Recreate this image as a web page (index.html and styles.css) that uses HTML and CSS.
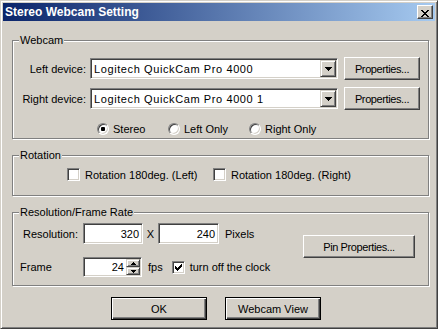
FILE: index.html
```html
<!DOCTYPE html>
<html lang="en">
<head>
    <meta charset="UTF-8" />
    <title>Stereo Webcam Setting</title>
    <link rel="stylesheet" href="styles.css">
</head>
<body>
    <div class="window">
        <div class="titlebar">
            <span class="title">Stereo Webcam Setting</span>
            <button class="btn close-btn">
                <svg width="8" height="7" viewBox="0 0 8 7" shape-rendering="crispEdges"><path fill="#000" d="M0 0h2v1h-2z M6 0h2v1h-2z M1 1h2v1h-2z M5 1h2v1h-2z M2 2h4v1h-4z M3 3h2v1h-2z M2 4h4v1h-4z M1 5h2v1h-2z M5 5h2v1h-2z M0 6h2v1h-2z M6 6h2v1h-2z"/></svg>
            </button>
        </div>

        <div class="client">
            <fieldset class="group group-webcam">
                <legend>Webcam</legend>
                <div class="device-row">
                    <span class="device-label">Left device:</span>
                    <div class="combo sunken">
                        <span class="combo-text">Logitech QuickCam Pro 4000</span>
                        <span class="combo-arrow">
                            <svg width="7" height="4" viewBox="0 0 7 4" shape-rendering="crispEdges"><path fill="#000" d="M0 0h7v1h-7z M1 1h5v1h-5z M2 2h3v1h-3z M3 3h1v1h-1z"/></svg>
                        </span>
                    </div>
                    <button class="btn btn-props">Properties...</button>
                </div>
                <div class="device-row">
                    <span class="device-label">Right device:</span>
                    <div class="combo sunken">
                        <span class="combo-text">Logitech QuickCam Pro 4000 1</span>
                        <span class="combo-arrow">
                            <svg width="7" height="4" viewBox="0 0 7 4" shape-rendering="crispEdges"><path fill="#000" d="M0 0h7v1h-7z M1 1h5v1h-5z M2 2h3v1h-3z M3 3h1v1h-1z"/></svg>
                        </span>
                    </div>
                    <button class="btn btn-props">Properties...</button>
                </div>
                <div class="radio-row">
                    <label class="option option-stereo"><span class="radio"><span class="radio-dot"></span></span>Stereo</label>
                    <label class="option option-left"><span class="radio"></span>Left Only</label>
                    <label class="option"><span class="radio"></span>Right Only</label>
                </div>
            </fieldset>

            <fieldset class="group group-rotation">
                <legend>Rotation</legend>
                <div class="check-row">
                    <label class="check-option check-left"><span class="checkbox"></span>Rotation 180deg. (Left)</label>
                    <label class="check-option"><span class="checkbox"></span>Rotation 180deg. (Right)</label>
                </div>
            </fieldset>

            <fieldset class="group group-res">
                <legend>Resolution/Frame Rate</legend>
                <div class="res-body">
                    <div class="res-fields">
                        <div class="res-row">
                            <span class="res-label">Resolution:</span>
                            <div class="edit sunken edit-w">320</div>
                            <span class="times">X</span>
                            <div class="edit sunken edit-h">240</div>
                            <span class="unit">Pixels</span>
                        </div>
                        <div class="res-row res-row-frame">
                            <span class="res-label res-label-frame">Frame</span>
                            <div class="spin sunken">
                                <span class="spin-value">24</span>
                                <span class="updown">
                                    <span class="updown-btn">
                                        <svg width="5" height="3" viewBox="0 0 5 3" shape-rendering="crispEdges"><path fill="#000" d="M2 0h1v1h-1z M1 1h3v1h-3z M0 2h5v1h-5z"/></svg>
                                    </span>
                                    <span class="updown-btn">
                                        <svg width="5" height="3" viewBox="0 0 5 3" shape-rendering="crispEdges"><path fill="#000" d="M0 0h5v1h-5z M1 1h3v1h-3z M2 2h1v1h-1z"/></svg>
                                    </span>
                                </span>
                            </div>
                            <span class="unit">fps</span>
                            <label class="check-option check-clock">
                                <span class="checkbox">
                                    <svg width="7" height="7" viewBox="0 0 7 7" shape-rendering="crispEdges"><path fill="#000" d="M6 0h1v1h-1z M5 1h2v1h-2z M0 2h1v1h-1z M4 2h3v1h-3z M0 3h2v1h-2z M3 3h3v1h-3z M0 4h5v1h-5z M1 5h3v1h-3z M2 6h1v1h-1z"/></svg>
                                </span>turn off the clock</label>
                        </div>
                    </div>
                    <button class="btn btn-pin">Pin Properties...</button>
                </div>
            </fieldset>

            <div class="actions">
                <button class="btn btn-default btn-action">OK</button>
                <button class="btn btn-default btn-action">Webcam View</button>
            </div>
        </div>
    </div>
</body>
</html>
```

FILE: styles.css
```css
body {
    margin: 0;
    font-family: "Liberation Sans", Arial, sans-serif;
    font-size: 11px;
    color: #000;
    background-color: #d4d0c8;
}
.window {
    width: 438px;
    height: 329px;
    box-sizing: border-box;
    padding: 2px;
    background-color: #d4d0c8;
    border: 1px solid;
    border-color: #d4d0c8 #404040 #404040 #d4d0c8;
    box-shadow: inset 1px 1px 0 #fff, inset -1px -1px 0 #808080;
}
.titlebar {
    height: 18px;
    display: flex;
    align-items: center;
    justify-content: space-between;
    padding: 0 2px;
    background: linear-gradient(to right, #0a246a, #a6caf0);
}
.title {
    color: #fff;
    font-weight: bold;
    font-size: 12px;
}

/* raised push button */
.btn {
    box-sizing: border-box;
    height: 23px;
    padding: 0;
    font: inherit;
    color: #000;
    background-color: #d4d0c8;
    border: 1px solid;
    border-color: #fff #404040 #404040 #fff;
    box-shadow: inset -1px -1px 0 #808080;
}
.btn-default {
    border: 1px solid #000;
    box-shadow: inset 1px 1px 0 #fff, inset -1px -1px 0 #404040, inset -2px -2px 0 #808080;
}
.close-btn {
    width: 16px;
    height: 14px;
    padding: 2px 0 0 3px;
    display: block;
}
.close-btn svg {
    display: block;
}

/* sunken white field */
.sunken {
    box-sizing: border-box;
    background-color: #fff;
    border: 1px solid;
    border-color: #808080 #fff #fff #808080;
    box-shadow: inset 1px 1px 0 #404040, inset -1px -1px 0 #d4d0c8;
}

.client {
    padding-top: 13px;
}
.group {
    margin: 0 0 0 9px;
    padding: 0;
    width: 417px;
    min-inline-size: 0;
    box-sizing: border-box;
    border: 1px solid #808080;
    box-shadow: 1px 1px 0 #fff, inset 1px 1px 0 #fff;
}
.group legend {
    margin-left: 6px;
    padding: 0 1px;
    line-height: 13px;
    background-color: #d4d0c8;
}

.group-webcam {
    height: 105px;
    padding-top: 10px;
}
.device-row {
    display: flex;
    align-items: center;
    height: 23px;
}
.device-row + .device-row {
    margin-top: 7px;
}
.device-label {
    width: 77px;
    box-sizing: border-box;
    padding-right: 4px;
    text-align: right;
}
.combo {
    width: 248px;
    height: 21px;
    display: flex;
    align-items: center;
    justify-content: space-between;
}
.combo-text {
    padding-left: 3px;
    letter-spacing: 0.6px;
}
.combo-arrow {
    width: 16px;
    height: 17px;
    margin-right: 1px;
    box-sizing: border-box;
    display: flex;
    align-items: center;
    justify-content: center;
    background-color: #d4d0c8;
    border: 1px solid;
    border-color: #d4d0c8 #404040 #404040 #d4d0c8;
    box-shadow: inset 1px 1px 0 #fff, inset -1px -1px 0 #808080;
}
.btn-props {
    width: 76px;
    margin-left: 6px;
    letter-spacing: -0.4px;
}

.radio-row {
    display: flex;
    align-items: center;
    height: 13px;
    margin: 12px 0 0 84px;
}
.option {
    display: flex;
    align-items: center;
    gap: 4px;
}
.option-stereo {
    width: 71px;
}
.option-left {
    width: 81px;
}
.radio {
    width: 12px;
    height: 12px;
    box-sizing: border-box;
    border-radius: 50%;
    background-color: #fff;
    border: 1px solid;
    border-color: #808080 #fff #fff #808080;
    box-shadow: inset 1px 1px 0 #404040, inset -1px -1px 0 #d4d0c8;
    display: flex;
    align-items: center;
    justify-content: center;
}
.radio-dot {
    width: 4px;
    height: 4px;
    border-radius: 1px;
    background-color: #000;
}

.group-rotation {
    margin-top: 10px;
    height: 47px;
    padding-top: 6px;
}
.check-row {
    display: flex;
    align-items: center;
    height: 13px;
    margin-left: 54px;
}
.check-option {
    display: flex;
    align-items: center;
    gap: 5px;
}
.check-left {
    width: 146px;
}
.checkbox {
    width: 13px;
    height: 13px;
    box-sizing: border-box;
    padding: 2px;
    background-color: #fff;
    border: 1px solid;
    border-color: #808080 #fff #fff #808080;
    box-shadow: inset 1px 1px 0 #404040, inset -1px -1px 0 #d4d0c8;
}
.checkbox svg {
    display: block;
}

.group-res {
    margin-top: 10px;
    height: 80px;
    padding: 4px 13px 0 0;
}
.res-body {
    display: flex;
    justify-content: space-between;
    align-items: flex-start;
}
.res-row {
    display: flex;
    align-items: center;
    height: 21px;
}
.res-row-frame {
    height: 20px;
    margin-top: 13px;
}
.res-label {
    width: 70px;
    box-sizing: border-box;
    padding-left: 10px;
}
.res-label-frame {
    padding-left: 7px;
}
.edit {
    height: 21px;
    display: flex;
    align-items: center;
    justify-content: flex-end;
    padding-right: 3px;
}
.edit-w {
    width: 60px;
}
.edit-h {
    width: 61px;
}
.times {
    width: 15px;
    text-align: center;
}
.unit {
    margin-left: 6px;
}
.spin {
    width: 59px;
    height: 20px;
    display: flex;
    padding: 1px;
}
.spin-value {
    flex: 1;
    display: flex;
    align-items: center;
    justify-content: flex-end;
    padding-right: 2px;
}
.updown {
    width: 14px;
    display: flex;
    flex-direction: column;
}
.updown-btn {
    height: 8px;
    box-sizing: border-box;
    display: flex;
    align-items: center;
    justify-content: center;
    background-color: #d4d0c8;
    border: 1px solid;
    border-color: #d4d0c8 #404040 #404040 #d4d0c8;
    box-shadow: inset 1px 1px 0 #fff, inset -1px -1px 0 #808080;
}
.check-clock {
    margin-left: 9px;
}
.btn-pin {
    width: 112px;
    margin-top: 12px;
    letter-spacing: -0.4px;
}

.actions {
    display: flex;
    gap: 18px;
    margin: 11px 0 0 108px;
}
.btn-action {
    width: 96px;
}
```
